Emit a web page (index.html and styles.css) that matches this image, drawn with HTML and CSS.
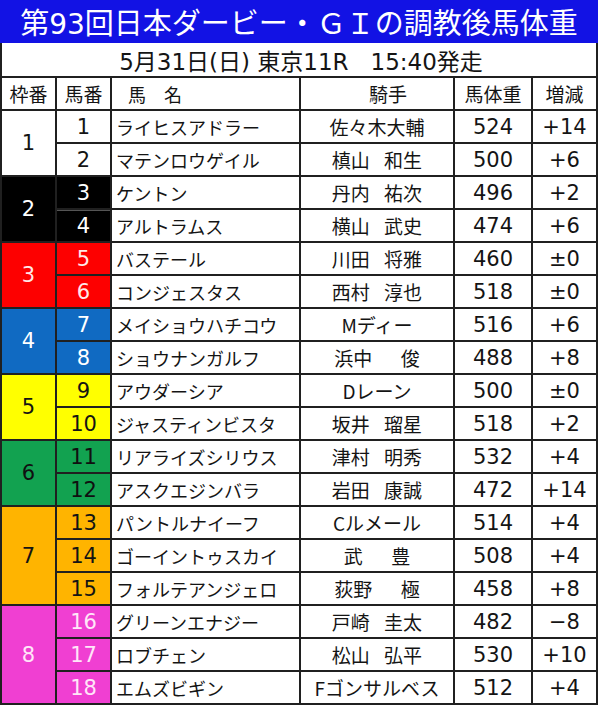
FILE: index.html
```html
<!DOCTYPE html>
<html lang="ja">
<head>
<meta charset="utf-8">
<link rel="stylesheet" href="styles.css">
</head>
<body>
<div class="page">
  <div class="title">第<span class="tnum">93</span>回日本ダービー・ＧＩの調教後馬体重</div>
  <div class="grid">
    <div class="sub">5月31日(日) 東京11R   15:40発走</div>

    <div class="c hd">枠番</div>
    <div class="c hd">馬番</div>
    <div class="c hd name-hd">馬　名</div>
    <div class="c hd jk-hd">騎手</div>
    <div class="c hd">馬体重</div>
    <div class="c hd">増減</div>

    <div class="c waku w1 s2">1</div>
    <div class="c ban w1">1</div><div class="c name">ライヒスアドラー</div><div class="c jk">佐々木大輔</div><div class="c num">524</div><div class="c num">+14</div>
    <div class="c ban w1">2</div><div class="c name">マテンロウゲイル</div><div class="c jk">槙山 和生</div><div class="c num">500</div><div class="c num">+6</div>

    <div class="c waku w2 s2">2</div>
    <div class="c ban w2">3</div><div class="c name">ケントン</div><div class="c jk">丹内 祐次</div><div class="c num">496</div><div class="c num">+2</div>
    <div class="c ban w2 lower">4</div><div class="c name">アルトラムス</div><div class="c jk">横山 武史</div><div class="c num">474</div><div class="c num">+6</div>

    <div class="c waku w3 s2">3</div>
    <div class="c ban w3">5</div><div class="c name">バステール</div><div class="c jk">川田 将雅</div><div class="c num">460</div><div class="c num">±0</div>
    <div class="c ban w3">6</div><div class="c name">コンジェスタス</div><div class="c jk">西村 淳也</div><div class="c num">518</div><div class="c num">±0</div>

    <div class="c waku w4 s2">4</div>
    <div class="c ban w4">7</div><div class="c name">メイショウハチコウ</div><div class="c jk">Mディー</div><div class="c num">516</div><div class="c num">+6</div>
    <div class="c ban w4">8</div><div class="c name">ショウナンガルフ</div><div class="c jk">浜中  俊</div><div class="c num">488</div><div class="c num">+8</div>

    <div class="c waku w5 s2">5</div>
    <div class="c ban w5">9</div><div class="c name">アウダーシア</div><div class="c jk">Dレーン</div><div class="c num">500</div><div class="c num">±0</div>
    <div class="c ban w5">10</div><div class="c name">ジャスティンビスタ</div><div class="c jk">坂井 瑠星</div><div class="c num">518</div><div class="c num">+2</div>

    <div class="c waku w6 s2">6</div>
    <div class="c ban w6">11</div><div class="c name">リアライズシリウス</div><div class="c jk">津村 明秀</div><div class="c num">532</div><div class="c num">+4</div>
    <div class="c ban w6">12</div><div class="c name">アスクエジンバラ</div><div class="c jk">岩田 康誠</div><div class="c num">472</div><div class="c num">+14</div>

    <div class="c waku w7 s3">7</div>
    <div class="c ban w7">13</div><div class="c name">パントルナイーフ</div><div class="c jk">Cルメール</div><div class="c num">514</div><div class="c num">+4</div>
    <div class="c ban w7">14</div><div class="c name">ゴーイントゥスカイ</div><div class="c jk">武  豊</div><div class="c num">508</div><div class="c num">+4</div>
    <div class="c ban w7">15</div><div class="c name">フォルテアンジェロ</div><div class="c jk">荻野  極</div><div class="c num">458</div><div class="c num">+8</div>

    <div class="c waku w8 s3">8</div>
    <div class="c ban w8">16</div><div class="c name">グリーンエナジー</div><div class="c jk">戸崎 圭太</div><div class="c num">482</div><div class="c num">−8</div>
    <div class="c ban w8">17</div><div class="c name">ロブチェン</div><div class="c jk">松山 弘平</div><div class="c num">530</div><div class="c num">+10</div>
    <div class="c ban w8">18</div><div class="c name">エムズビギン</div><div class="c jk">Fゴンサルベス</div><div class="c num">512</div><div class="c num">+4</div>
  </div>
</div>
</body>
</html>
```

FILE: styles.css
```css
html, body {
  margin: 0;
  padding: 0;
  background: #ffffff;
}
body {
  font-family: "Noto Sans CJK JP", sans-serif;
  color: #141414;
}
.page {
  width: 598px;
}
.title {
  height: 43px;
  background: #1212e4;
  color: #ffffff;
  font-size: 29px;
  line-height: 43px;
  text-align: center;
  white-space: nowrap;
}
.tnum {
  font-family: "DejaVu Sans", sans-serif;
  font-size: 28px;
}
.grid {
  display: grid;
  grid-template-columns: 53px 53px 187px 152px 76px 63px;
  grid-template-rows: 33px 31px;
  grid-auto-rows: 31px;
  gap: 2px;
  padding: 0 2px 2px 2px;
  background: #202020;
}
.sub {
  grid-column: 1 / -1;
  background: #ffffff;
  font-family: "DejaVu Sans", "Noto Sans CJK JP", sans-serif;
  font-size: 23px;
  display: flex;
  align-items: center;
  justify-content: center;
  white-space: pre;
  padding-left: 4px;
}
.c {
  background: #ffffff;
  display: flex;
  align-items: center;
  justify-content: center;
  white-space: pre;
  overflow: hidden;
}
.hd {
  font-size: 19px;
}
.name-hd {
  justify-content: flex-start;
  padding-left: 16px;
  font-size: 18px;
}
.jk-hd {
  padding-left: 22px;
}
.waku {
  grid-column: 1;
  font-family: "DejaVu Sans", sans-serif;
  font-size: 21px;
}
.s2 { grid-row: span 2; }
.s3 { grid-row: span 3; }
.ban {
  grid-column: 2;
  font-family: "DejaVu Sans", sans-serif;
  font-size: 21px;
}
.name {
  grid-column: 3;
  justify-content: flex-start;
  padding-left: 4px;
  font-size: 18px;
}
.jk {
  grid-column: 4;
  font-size: 19px;
  word-spacing: 10px;
}
.num {
  font-family: "DejaVu Sans", sans-serif;
  font-size: 21px;
}
.w1 { background: #ffffff; color: #141414; }
.w2 { background: #000000; color: #ffffff; }
.w2.lower { box-shadow: inset 0 1px 0 #555555; }
.w3 { background: #fd0000; color: #ffe8e8; }
.w4 { background: #106ac2; color: #ffffff; }
.w5 { background: #ffff00; color: #141414; }
.w6 { background: #12a250; color: #101010; }
.w7 { background: #ffb400; color: #141414; }
.w8 { background: #f03fd2; color: #ffe6f8; }
```
